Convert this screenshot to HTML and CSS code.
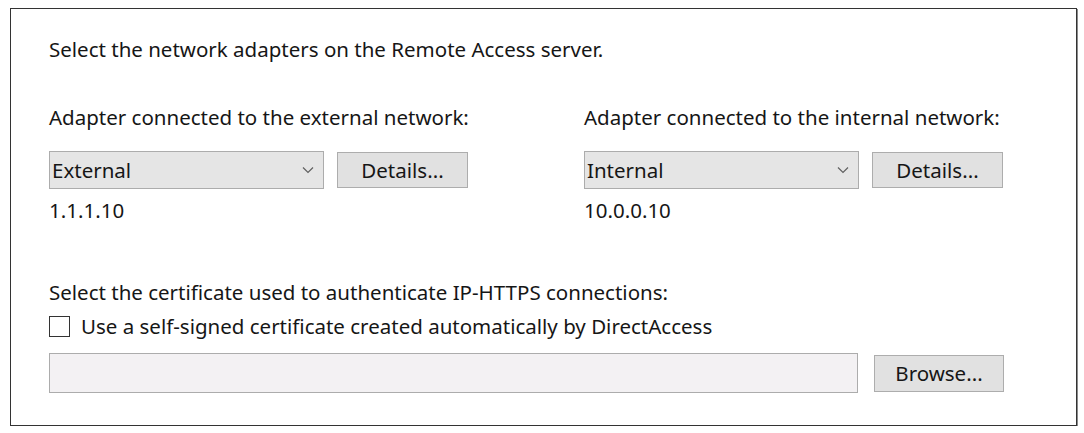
FILE: index.html
```html
<!DOCTYPE html>
<html>
<head>
<meta charset="utf-8">
<link rel="stylesheet" href="styles.css">
</head>
<body>
<div class="frame">
  <p class="intro">Select the network adapters on the Remote Access server.</p>
  <div class="adapters">
    <div class="col">
      <div class="label">Adapter connected to the external network:</div>
      <div class="row">
        <div class="combo"><span>External</span><svg class="chev" width="12" height="8" viewBox="0 0 12 8"><polyline points="1,1.5 6,6.5 11,1.5" fill="none" stroke="#606060" stroke-width="1.2"/></svg></div>
        <div class="btn">Details...</div>
      </div>
      <div class="ip">1.1.1.10</div>
    </div>
    <div class="col">
      <div class="label">Adapter connected to the internal network:</div>
      <div class="row">
        <div class="combo"><span>Internal</span><svg class="chev" width="12" height="8" viewBox="0 0 12 8"><polyline points="1,1.5 6,6.5 11,1.5" fill="none" stroke="#606060" stroke-width="1.2"/></svg></div>
        <div class="btn">Details...</div>
      </div>
      <div class="ip">10.0.0.10</div>
    </div>
  </div>
  <div class="label cert-label">Select the certificate used to authenticate IP-HTTPS connections:</div>
  <div class="check-row"><span class="box"></span><span>Use a self-signed certificate created automatically by DirectAccess</span></div>
  <div class="cert-row">
    <div class="textbox"></div>
    <div class="btn browse">Browse...</div>
  </div>
</div>
</body>
</html>
```
FILE: styles.css
```css
html, body {
  margin: 0;
  padding: 0;
  background: #ffffff;
}
body {
  font-family: "Noto Sans", "Open Sans", sans-serif;
  font-size: 20.5px;
  color: #161616;
}
.frame {
  box-sizing: border-box;
  margin: 8px 0 0 10px;
  width: 1067px;
  height: 418px;
  border: 1px solid #333;
  box-shadow: 1px 1px 0 #8a8a8a;
  padding: 26px 0 0 38px;
}
.intro {
  margin: 0;
  line-height: 28px;
  height: 28px;
}
.adapters {
  display: grid;
  grid-template-columns: 535px 420px;
  margin-top: 40px;
}
.label {
  line-height: 28px;
  height: 28px;
  white-space: nowrap;
}
.row {
  display: flex;
  align-items: center;
  gap: 13px;
  margin-top: 20px;
  height: 38px;
}
.combo {
  box-sizing: border-box;
  width: 275px;
  height: 38px;
  background: #e5e5e5;
  border: 1px solid #acacac;
  display: flex;
  align-items: center;
  justify-content: space-between;
  padding: 0 9px 0 2px;
}
.btn {
  box-sizing: border-box;
  width: 131px;
  height: 36px;
  background: #e1e1e1;
  border: 1px solid #adadad;
  display: flex;
  align-items: center;
  justify-content: center;
}
.ip {
  margin-top: 7px;
  line-height: 28px;
  height: 28px;
}
.cert-label {
  margin-top: 54px;
}
.check-row {
  margin-top: 6px;
  height: 28px;
  display: flex;
  align-items: center;
  gap: 11px;
  white-space: nowrap;
}
.box {
  box-sizing: border-box;
  width: 21px;
  height: 21px;
  border: 1px solid #333;
  background: #fff;
}
.cert-row {
  margin-top: 13px;
  display: flex;
  align-items: center;
  gap: 16px;
}
.textbox {
  box-sizing: border-box;
  width: 809px;
  height: 40px;
  background: #f3f1f3;
  border: 1px solid #acacac;
}
.browse {
  width: 130px;
  height: 37px;
}
```
